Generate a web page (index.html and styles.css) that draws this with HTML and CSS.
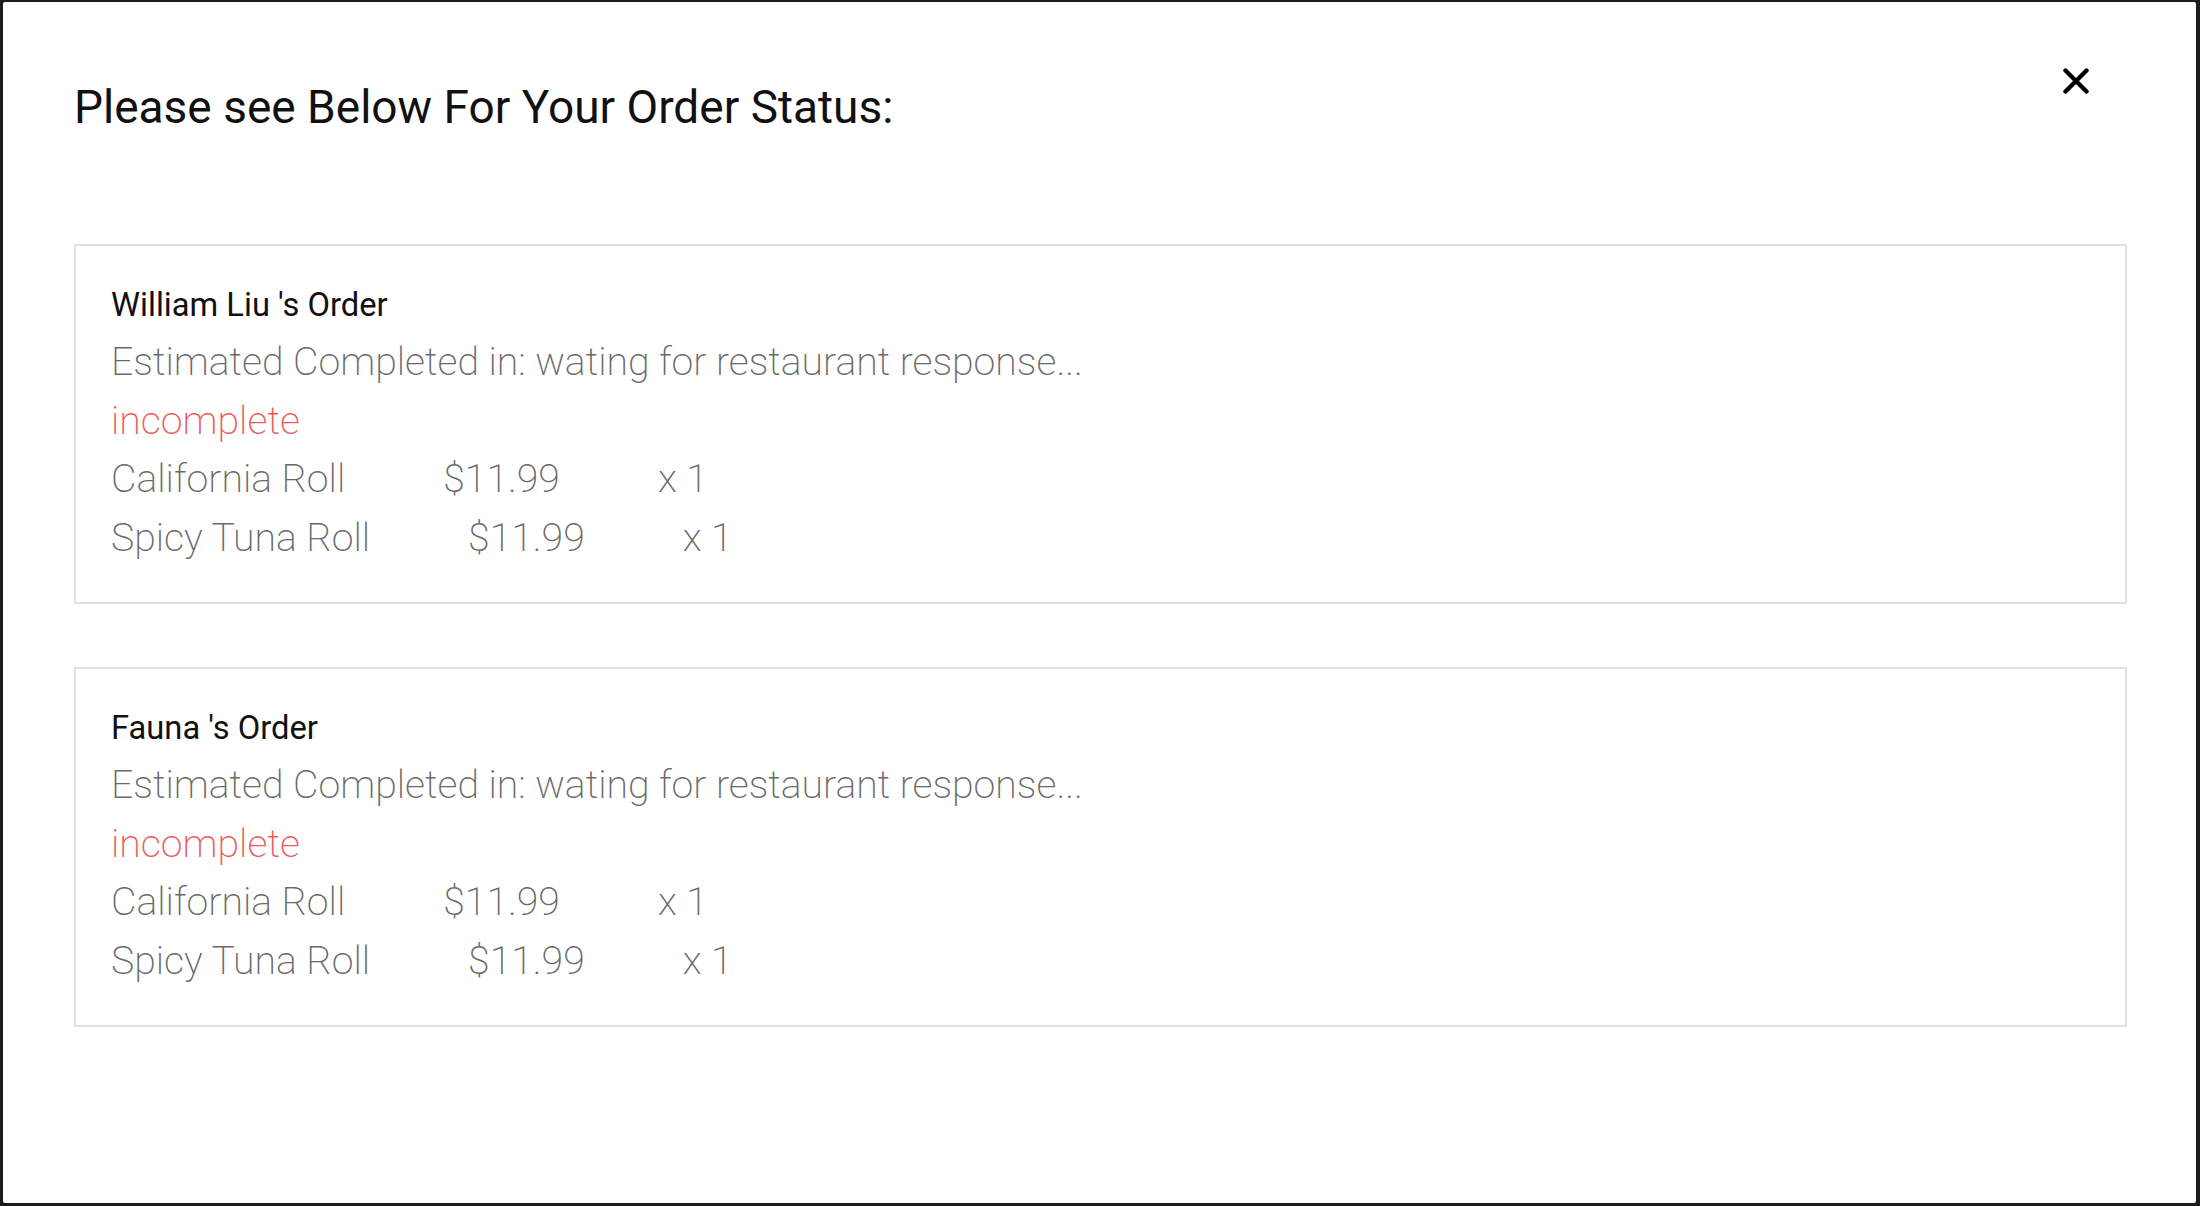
FILE: index.html
```html
<!DOCTYPE html>
<html>
<head>
<meta charset="utf-8">
<link rel="stylesheet" href="styles.css">
</head>
<body>
<div class="modal">
  <button class="close" aria-label="close">
    <svg width="26" height="26" viewBox="0 0 26 26"><path d="M2.5 2.5 L23.5 23.5 M23.5 2.5 L2.5 23.5" stroke="#000" stroke-width="4.4" stroke-linecap="round" fill="none"/></svg>
  </button>
  <h2 class="title">Please see Below For Your Order Status:</h2>
  <div class="orders">
    <div class="card">
      <div class="name">William Liu 's Order</div>
      <div class="line">Estimated Completed in: wating for restaurant response...</div>
      <div class="line status">incomplete</div>
      <div class="line item"><span>California Roll</span><span class="price">$11.99</span><span class="qty">x 1</span></div>
      <div class="line item"><span>Spicy Tuna Roll</span><span class="price">$11.99</span><span class="qty">x 1</span></div>
    </div>
    <div class="card">
      <div class="name">Fauna 's Order</div>
      <div class="line">Estimated Completed in: wating for restaurant response...</div>
      <div class="line status">incomplete</div>
      <div class="line item"><span>California Roll</span><span class="price">$11.99</span><span class="qty">x 1</span></div>
      <div class="line item"><span>Spicy Tuna Roll</span><span class="price">$11.99</span><span class="qty">x 1</span></div>
    </div>
  </div>
</div>
</body>
</html>
```
FILE: styles.css
```css
html, body {
  margin: 0;
  padding: 0;
  height: 100%;
}
body {
  background: #1b1d1b;
  font-family: Roboto, "Noto Sans", sans-serif;
  padding: 2px 4px 3px 3px;
  box-sizing: border-box;
}
.modal {
  position: relative;
  background: #fff;
  height: 100%;
  box-sizing: border-box;
  padding: 78px 69px 0 71px;
  border-radius: 2px;
}
.close {
  position: absolute;
  top: 66px;
  right: 107px;
  width: 26px;
  height: 26px;
  padding: 0;
  border: 0;
  background: none;
  display: flex;
}
.title {
  margin: 0;
  font-size: 46px;
  font-weight: 400;
  line-height: 54px;
  color: #111;
}
.orders {
  margin-top: 110px;
  display: flex;
  flex-direction: column;
  gap: 63px;
}
.card {
  border: 2px solid #e0e0e0;
  height: 360px;
  box-sizing: border-box;
  padding: 31px 24px 0 35px;
}
.name {
  font-size: 32.7px;
  line-height: 56px;
  color: #111;
  font-weight: 400;
}
.line {
  font-size: 39.2px;
  line-height: 58.5px;
  font-weight: 200;
  color: #6a6a6a;
}
.status {
  color: #ee5a5a;
}
.item .price {
  margin-left: 98px;
}
.item .qty {
  margin-left: 98px;
}
```
